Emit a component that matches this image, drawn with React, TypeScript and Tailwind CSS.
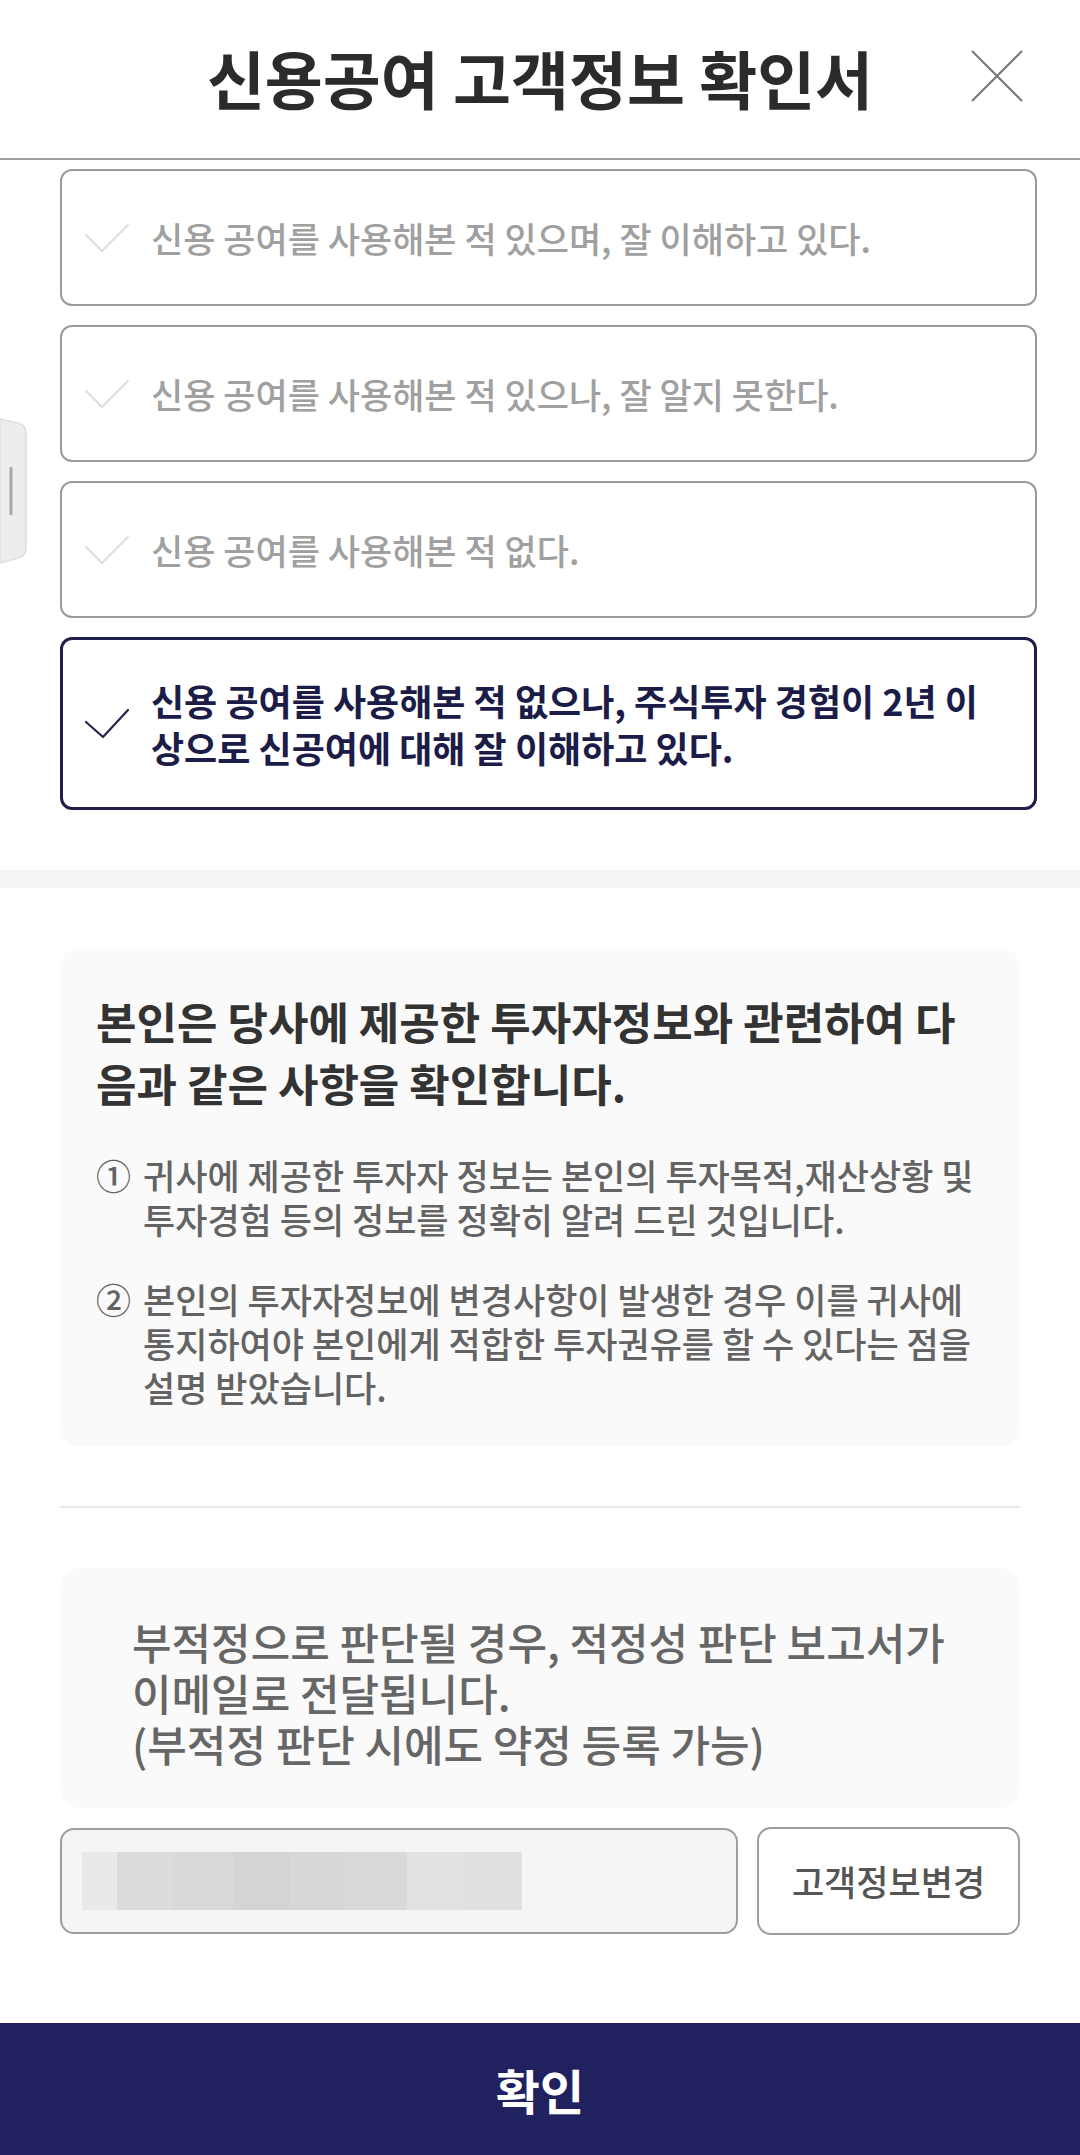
import React from "react";

const FONT = { fontFamily: '"Noto Sans CJK KR", "Noto Sans", sans-serif' };

function Check({ active }: { active?: boolean }) {
  return (
    <svg width="44" height="30" viewBox="0 0 44 30" className="shrink-0">
      <polyline
        points={active ? "1,13 18,28 43,1" : "1,12 17,28 43,2"}
        fill="none"
        stroke={active ? "#24244a" : "#dcdcdc"}
        strokeWidth={active ? 2.2 : 1.8}
        strokeLinecap="round"
        strokeLinejoin="round"
      />
    </svg>
  );
}

function Option({ children, active }: { children: React.ReactNode; active?: boolean }) {
  return (
    <div
      className={
        active
          ? "h-[173px] rounded-[12px] border-[3px] border-[#1f1f4a] flex items-center pl-[22px] bg-white"
          : "h-[137px] rounded-[12px] border-2 border-[#9a9a9a] flex items-center pl-[23px] bg-white"
      }
    >
      <Check active={active} />
      <div
        className={
          active
            ? "ml-[22px] text-[36px] leading-[47px] font-bold text-[#1c1c48] whitespace-nowrap"
            : "ml-[22px] text-[35px] leading-[50px] font-medium text-[#a0a0a0] whitespace-nowrap"
        }
      >
        {children}
      </div>
    </div>
  );
}

export default function App() {
  const blocks = [
    { w: 35, c: "#e9e9e9" },
    { w: 56, c: "#dcdcdc" },
    { w: 60, c: "#d9d9d9" },
    { w: 57, c: "#d4d4d4" },
    { w: 55, c: "#d7d7d7" },
    { w: 62, c: "#d9d9d9" },
    { w: 57, c: "#e2e2e2" },
    { w: 58, c: "#e0e0e0" },
  ];
  return (
    <div className="w-[1080px] h-[2155px] bg-white flex flex-col relative overflow-hidden" style={FONT}>
      {/* Header */}
      <div className="h-[160px] border-b-2 border-[#a0a0a0] grid grid-cols-[1fr_auto_1fr] items-center pb-[6px] shrink-0">
        <div />
        <div className="text-[63px] font-bold text-[#2b2b2b] leading-none whitespace-nowrap">
          신용공여 고객정보 확인서
        </div>
        <div className="flex justify-end pr-[57px]">
          <svg width="52" height="52" viewBox="0 0 52 52">
            <line x1="1" y1="1" x2="51" y2="51" stroke="#777777" strokeWidth="2" />
            <line x1="51" y1="1" x2="1" y2="51" stroke="#777777" strokeWidth="2" />
          </svg>
        </div>
      </div>

      {/* Options */}
      <div className="pt-[9px] pl-[60px] pr-[43px] flex flex-col gap-[19px] shrink-0">
        <Option>신용 공여를 사용해본 적 있으며, 잘 이해하고 있다.</Option>
        <Option>신용 공여를 사용해본 적 있으나, 잘 알지 못한다.</Option>
        <Option>신용 공여를 사용해본 적 없다.</Option>
        <Option active>
          신용 공여를 사용해본 적 없으나, 주식투자 경험이 2년 이<br />
          상으로 신공여에 대해 잘 이해하고 있다.
        </Option>
      </div>

      {/* Separator band */}
      <div className="mt-[60px] h-[18px] bg-[#f4f4f4] shrink-0" />

      {/* Info box */}
      <div className="px-[60px] pt-[60px] shrink-0">
        <div className="rounded-[20px] bg-[#fafafa] pl-[36px] pr-[20px] pt-[42px] pb-[37px]">
          <div className="text-[44px] leading-[62px] font-bold text-[#333333] whitespace-nowrap">
            본인은 당사에 제공한 투자자정보와 관련하여 다<br />
            음과 같은 사항을 확인합니다.
          </div>
          <div className="mt-[39px] flex flex-col gap-[36px] text-[35px] leading-[44px] font-medium text-[#636363]">
            <div className="flex">
              <span className="w-[47px] shrink-0">①</span>
              <span className="whitespace-nowrap">
                귀사에 제공한 투자자 정보는 본인의 투자목적,재산상황 및<br />
                투자경험 등의 정보를 정확히 알려 드린 것입니다.
              </span>
            </div>
            <div className="flex">
              <span className="w-[47px] shrink-0">②</span>
              <span className="whitespace-nowrap">
                본인의 투자자정보에 변경사항이 발생한 경우 이를 귀사에<br />
                통지하여야 본인에게 적합한 투자권유를 할 수 있다는 점을<br />
                설명 받았습니다.
              </span>
            </div>
          </div>
        </div>
      </div>

      {/* Divider */}
      <div className="mx-[60px] mt-[60px] h-[2px] bg-[#e8e8e8] shrink-0" />

      {/* Notice box */}
      <div className="px-[60px] mt-[60px] shrink-0">
        <div className="h-[240px] rounded-[20px] bg-[#fafafa] pl-[72px] pt-[48px]">
          <div className="text-[43px] leading-[51px] font-medium text-[#666666] whitespace-nowrap">
            부적정으로 판단될 경우, 적정성 판단 보고서가<br />
            이메일로 전달됩니다.<br />
            (부적정 판단 시에도 약정 등록 가능)
          </div>
        </div>
      </div>

      {/* Input row */}
      <div className="px-[60px] mt-[19px] flex gap-[19px] items-center shrink-0">
        <div className="w-[678px] h-[106px] rounded-[14px] border-2 border-[#9e9e9e] bg-[#f5f5f5] flex items-center pl-[20px]">
          <div className="flex h-[58px]">
            {blocks.map((b, i) => (
              <div key={i} className="h-full" style={{ width: b.w, backgroundColor: b.c }} />
            ))}
          </div>
        </div>
        <div className="flex-1 h-[108px] rounded-[14px] border-2 border-[#9e9e9e] bg-white flex items-center justify-center">
          <span className="text-[35px] font-medium text-[#555555] whitespace-nowrap">고객정보변경</span>
        </div>
      </div>

      {/* Bottom button */}
      <div className="mt-auto h-[132px] bg-[#22215f] flex items-center justify-center shrink-0">
        <span className="text-[48px] font-bold text-white">확인</span>
      </div>

      {/* Left floating handle */}
      <div className="absolute left-0 top-[418px]">
        <svg width="28" height="147" viewBox="0 0 28 147">
          <path
            d="M0 1 L18 5 Q26 7 26 15 L26 130 Q26 138 18 140 L0 145 Z"
            fill="#ededed"
            stroke="#dddddd"
            strokeWidth="1.5"
          />
          <rect x="9.5" y="49" width="3" height="48" fill="#a8a8a8" />
        </svg>
      </div>
    </div>
  );
}
